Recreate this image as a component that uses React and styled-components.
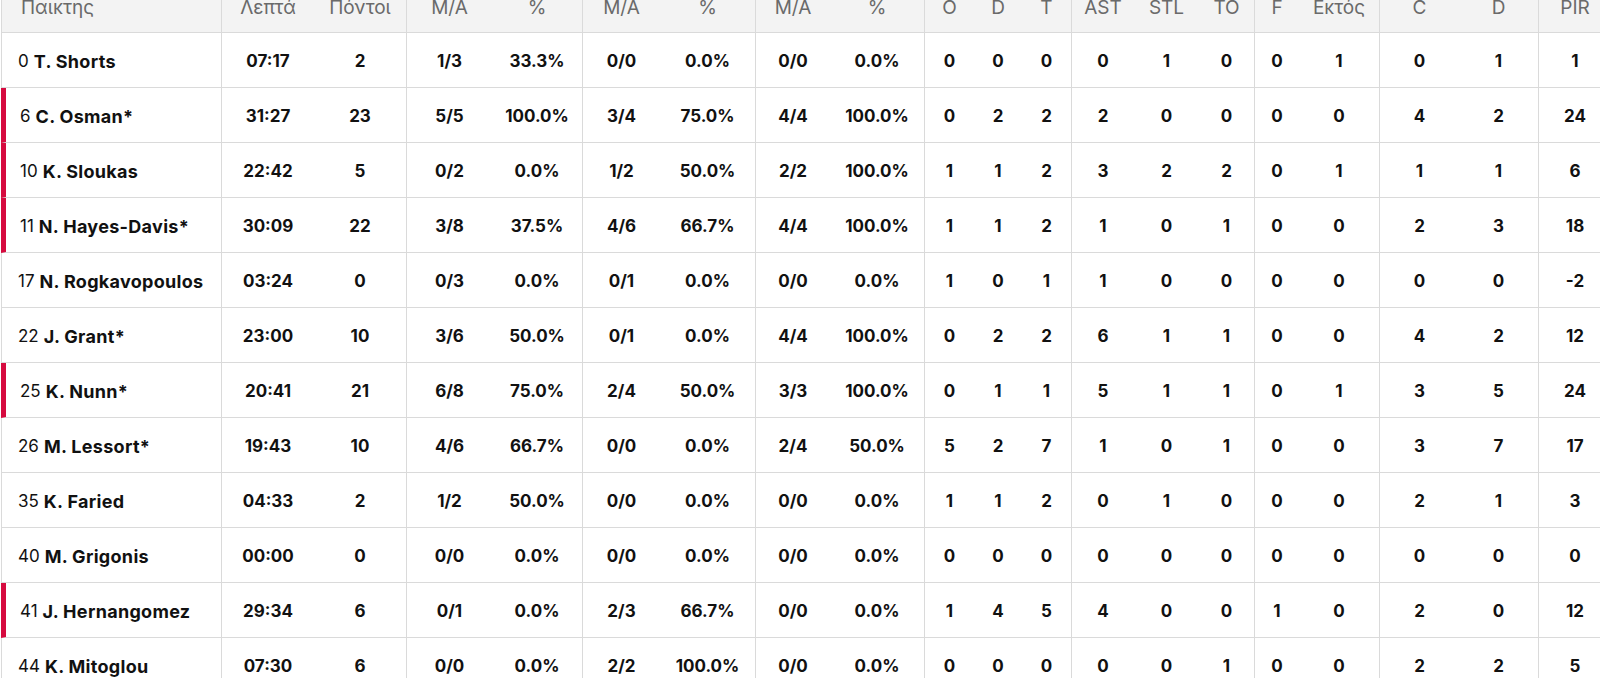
import React from "react";
import styled, { createGlobalStyle } from "styled-components";

const COLUMNS =
  "221px 92px 93px 85px 91px 77px 96px 74px 95px 49px 48px 50px 62px 65px 56px 44px 81px 79px 80px 72px";

// columns that close a group get a right border
const GROUP_ENDS = [0, 2, 4, 6, 8, 11, 14, 16, 18];

const HEADERS = [
  "Παικτης",
  "Λεπτά",
  "Πόντοι",
  "M/A",
  "%",
  "M/A",
  "%",
  "M/A",
  "%",
  "O",
  "D",
  "T",
  "AST",
  "STL",
  "TO",
  "F",
  "Εκτός",
  "C",
  "D",
  "PIR"
];

const PLAYERS = [
  { no: 0, name: "T. Shorts", oncourt: false, stats: ["07:17", "2", "1/3", "33.3%", "0/0", "0.0%", "0/0", "0.0%", "0", "0", "0", "0", "1", "0", "0", "1", "0", "1", "1"] },
  { no: 6, name: "C. Osman*", oncourt: true, stats: ["31:27", "23", "5/5", "100.0%", "3/4", "75.0%", "4/4", "100.0%", "0", "2", "2", "2", "0", "0", "0", "0", "4", "2", "24"] },
  { no: 10, name: "K. Sloukas", oncourt: true, stats: ["22:42", "5", "0/2", "0.0%", "1/2", "50.0%", "2/2", "100.0%", "1", "1", "2", "3", "2", "2", "0", "1", "1", "1", "6"] },
  { no: 11, name: "N. Hayes-Davis*", oncourt: true, stats: ["30:09", "22", "3/8", "37.5%", "4/6", "66.7%", "4/4", "100.0%", "1", "1", "2", "1", "0", "1", "0", "0", "2", "3", "18"] },
  { no: 17, name: "N. Rogkavopoulos", oncourt: false, stats: ["03:24", "0", "0/3", "0.0%", "0/1", "0.0%", "0/0", "0.0%", "1", "0", "1", "1", "0", "0", "0", "0", "0", "0", "-2"] },
  { no: 22, name: "J. Grant*", oncourt: false, stats: ["23:00", "10", "3/6", "50.0%", "0/1", "0.0%", "4/4", "100.0%", "0", "2", "2", "6", "1", "1", "0", "0", "4", "2", "12"] },
  { no: 25, name: "K. Nunn*", oncourt: true, stats: ["20:41", "21", "6/8", "75.0%", "2/4", "50.0%", "3/3", "100.0%", "0", "1", "1", "5", "1", "1", "0", "1", "3", "5", "24"] },
  { no: 26, name: "M. Lessort*", oncourt: false, stats: ["19:43", "10", "4/6", "66.7%", "0/0", "0.0%", "2/4", "50.0%", "5", "2", "7", "1", "0", "1", "0", "0", "3", "7", "17"] },
  { no: 35, name: "K. Faried", oncourt: false, stats: ["04:33", "2", "1/2", "50.0%", "0/0", "0.0%", "0/0", "0.0%", "1", "1", "2", "0", "1", "0", "0", "0", "2", "1", "3"] },
  { no: 40, name: "M. Grigonis", oncourt: false, stats: ["00:00", "0", "0/0", "0.0%", "0/0", "0.0%", "0/0", "0.0%", "0", "0", "0", "0", "0", "0", "0", "0", "0", "0", "0"] },
  { no: 41, name: "J. Hernangomez", oncourt: true, stats: ["29:34", "6", "0/1", "0.0%", "2/3", "66.7%", "0/0", "0.0%", "1", "4", "5", "4", "0", "0", "1", "0", "2", "0", "12"] },
  { no: 44, name: "K. Mitoglou", oncourt: false, stats: ["07:30", "6", "0/0", "0.0%", "2/2", "100.0%", "0/0", "0.0%", "0", "0", "0", "0", "0", "1", "0", "0", "2", "2", "5"] }
];

const GlobalStyle = createGlobalStyle`
  html, body {
    margin: 0;
    padding: 0;
    background: #fff;
    overflow: hidden;
  }
  body {
    font-family: Inter, "Noto Sans", sans-serif;
  }
`;

const App = () => (
  <>
    <GlobalStyle />
    <Scroller>
      <Table>
        <HeaderRow>
          {HEADERS.map((h, i) => (
            <HeadCell key={i} $first={i === 0} $end={GROUP_ENDS.includes(i)}>
              {h}
            </HeadCell>
          ))}
        </HeaderRow>
        {PLAYERS.map(p => (
          <Row key={p.no}>
            <PlayerCell $oncourt={p.oncourt}>
              <Number>{p.no}</Number>
              <Name>{p.name}</Name>
            </PlayerCell>
            {p.stats.map((s, i) => (
              <Cell key={i} $end={GROUP_ENDS.includes(i + 1)}>
                {s}
              </Cell>
            ))}
          </Row>
        ))}
      </Table>
    </Scroller>
  </>
);

const Scroller = styled.div`
  width: 1600px;
  height: 678px;
  overflow: hidden;
  padding-left: 1px;
  box-sizing: border-box;
`;

const Table = styled.div`
  margin-top: -18px;
  width: max-content;
`;

const HeaderRow = styled.div`
  display: grid;
  grid-template-columns: ${COLUMNS};
  height: 51px;
`;

const Row = styled.div`
  display: grid;
  grid-template-columns: ${COLUMNS};
  height: 55px;
`;

const HeadCell = styled.div`
  box-sizing: border-box;
  display: flex;
  align-items: center;
  justify-content: ${p => (p.$first ? "flex-start" : "center")};
  padding-left: ${p => (p.$first ? "19px" : "0")};
  background: #f3f3f3;
  color: #6a6a6a;
  font-size: 19px;
  font-weight: 400;
  white-space: nowrap;
  border-bottom: 1px solid #dadada;
  border-left: ${p => (p.$first ? "1px solid #dadada" : "none")};
  border-right: ${p => (p.$end ? "1px solid #dadada" : "none")};
`;

const Cell = styled.div`
  box-sizing: border-box;
  display: flex;
  align-items: center;
  justify-content: center;
  padding-top: 2px;
  color: #111;
  font-size: 17px;
  font-weight: 700;
  white-space: nowrap;
  border-bottom: 1px solid #dadada;
  border-right: ${p => (p.$end ? "1px solid #dadada" : "none")};
`;

const PlayerCell = styled(Cell)`
  justify-content: flex-start;
  gap: 5px;
  padding-left: ${p => (p.$oncourt ? "14px" : "16px")};
  border-left: ${p => (p.$oncourt ? "5px solid #d60b3f" : "1px solid #dadada")};
  border-right: 1px solid #dadada;
`;

const Number = styled.span`
  font-weight: 400;
`;

const Name = styled.span`
  font-size: 18px;
  font-weight: 700;
  letter-spacing: 0.3px;
`;

export default App;
